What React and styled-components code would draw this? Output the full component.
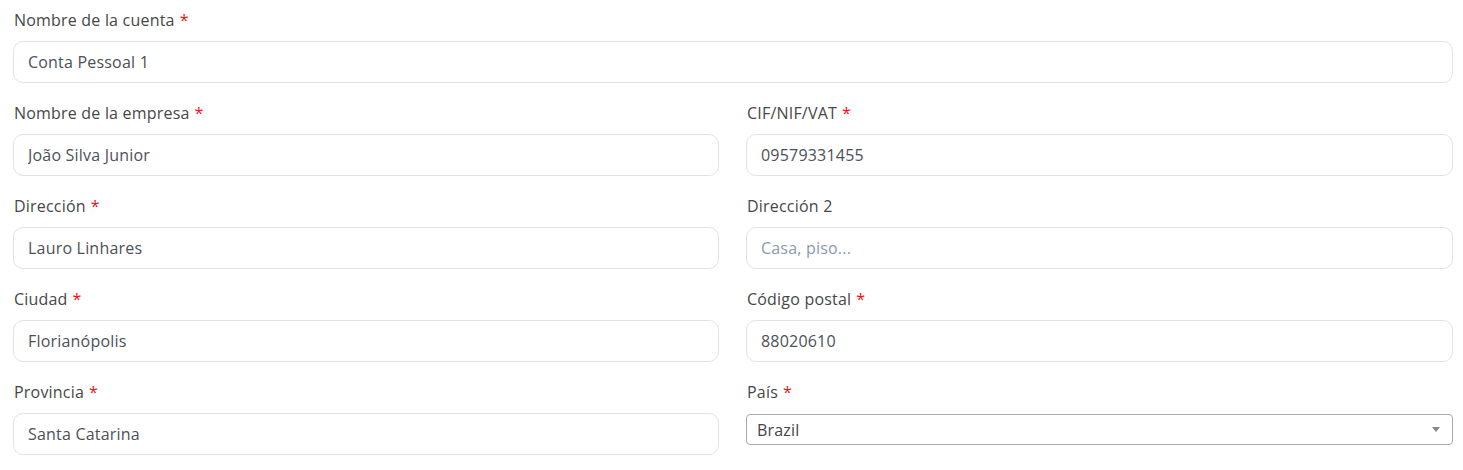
import styled, { createGlobalStyle } from "styled-components";

const GlobalStyle = createGlobalStyle`
    body {
        margin: 0;
        background: #fff;
        font-family: 'Open Sans', 'Liberation Sans', sans-serif;
    }
`;

const fields = [
    { label: "Nombre de la cuenta", value: "Conta Pessoal 1", required: true, full: true },
    { label: "Nombre de la empresa", value: "João Silva Junior", required: true },
    { label: "CIF/NIF/VAT", value: "09579331455", required: true },
    { label: "Dirección", value: "Lauro Linhares", required: true },
    { label: "Dirección 2", placeholder: "Casa, piso...", required: false },
    { label: "Ciudad", value: "Florianópolis", required: true },
    { label: "Código postal", value: "88020610", required: true },
    { label: "Provincia", value: "Santa Catarina", required: true },
];

const App = () => {
    return (
        <>
            <GlobalStyle />
            <Form>
                {fields.map((f) => (
                    <Field key={f.label} $full={f.full}>
                        <Label>
                            {f.label}
                            {f.required && <Star>*</Star>}
                        </Label>
                        <Input defaultValue={f.value} placeholder={f.placeholder} />
                    </Field>
                ))}
                <Field>
                    <Label>
                        País<Star>*</Star>
                    </Label>
                    <Select>
                        <span>Brazil</span>
                        <Arrow />
                    </Select>
                </Field>
            </Form>
        </>
    )
}

export default App

const Form = styled.form`
    display: grid;
    grid-template-columns: 706px 707px;
    column-gap: 27px;
    row-gap: 19px;
    padding: 9px 0 0 13px;
`;

const Field = styled.div`
    display: flex;
    flex-direction: column;
    grid-column: ${(p) => (p.$full ? "1 / -1" : "auto")};
`;

const Label = styled.label`
    font-size: 16px;
    letter-spacing: 0.2px;
    line-height: 22px;
    font-weight: 500;
    color: #474747;
    margin: 0 0 10px 1px;
`;

const Star = styled.span`
    color: #ee1111;
    margin-left: 5px;
`;

const Input = styled.input`
    box-sizing: border-box;
    height: 42px;
    width: 100%;
    padding: 0 14px;
    border: 1px solid #e2e2e2;
    border-radius: 10px;
    font-family: inherit;
    font-size: 16px;
    letter-spacing: 0.2px;
    color: #4d5058;
    outline: none;

    &::placeholder {
        color: #8b9ab0;
    }
`;

const Select = styled.div`
    box-sizing: border-box;
    height: 31px;
    margin-top: 1px;
    display: flex;
    align-items: center;
    justify-content: space-between;
    padding: 0 10px;
    border: 1px solid #aaa;
    border-radius: 4px;
    font-size: 16px;
    letter-spacing: 0.2px;
    color: #444;
`;

const Arrow = styled.span`
    width: 0;
    height: 0;
    border-left: 4px solid transparent;
    border-right: 4px solid transparent;
    border-top: 5px solid #888;
    margin-right: 2px;
`;
